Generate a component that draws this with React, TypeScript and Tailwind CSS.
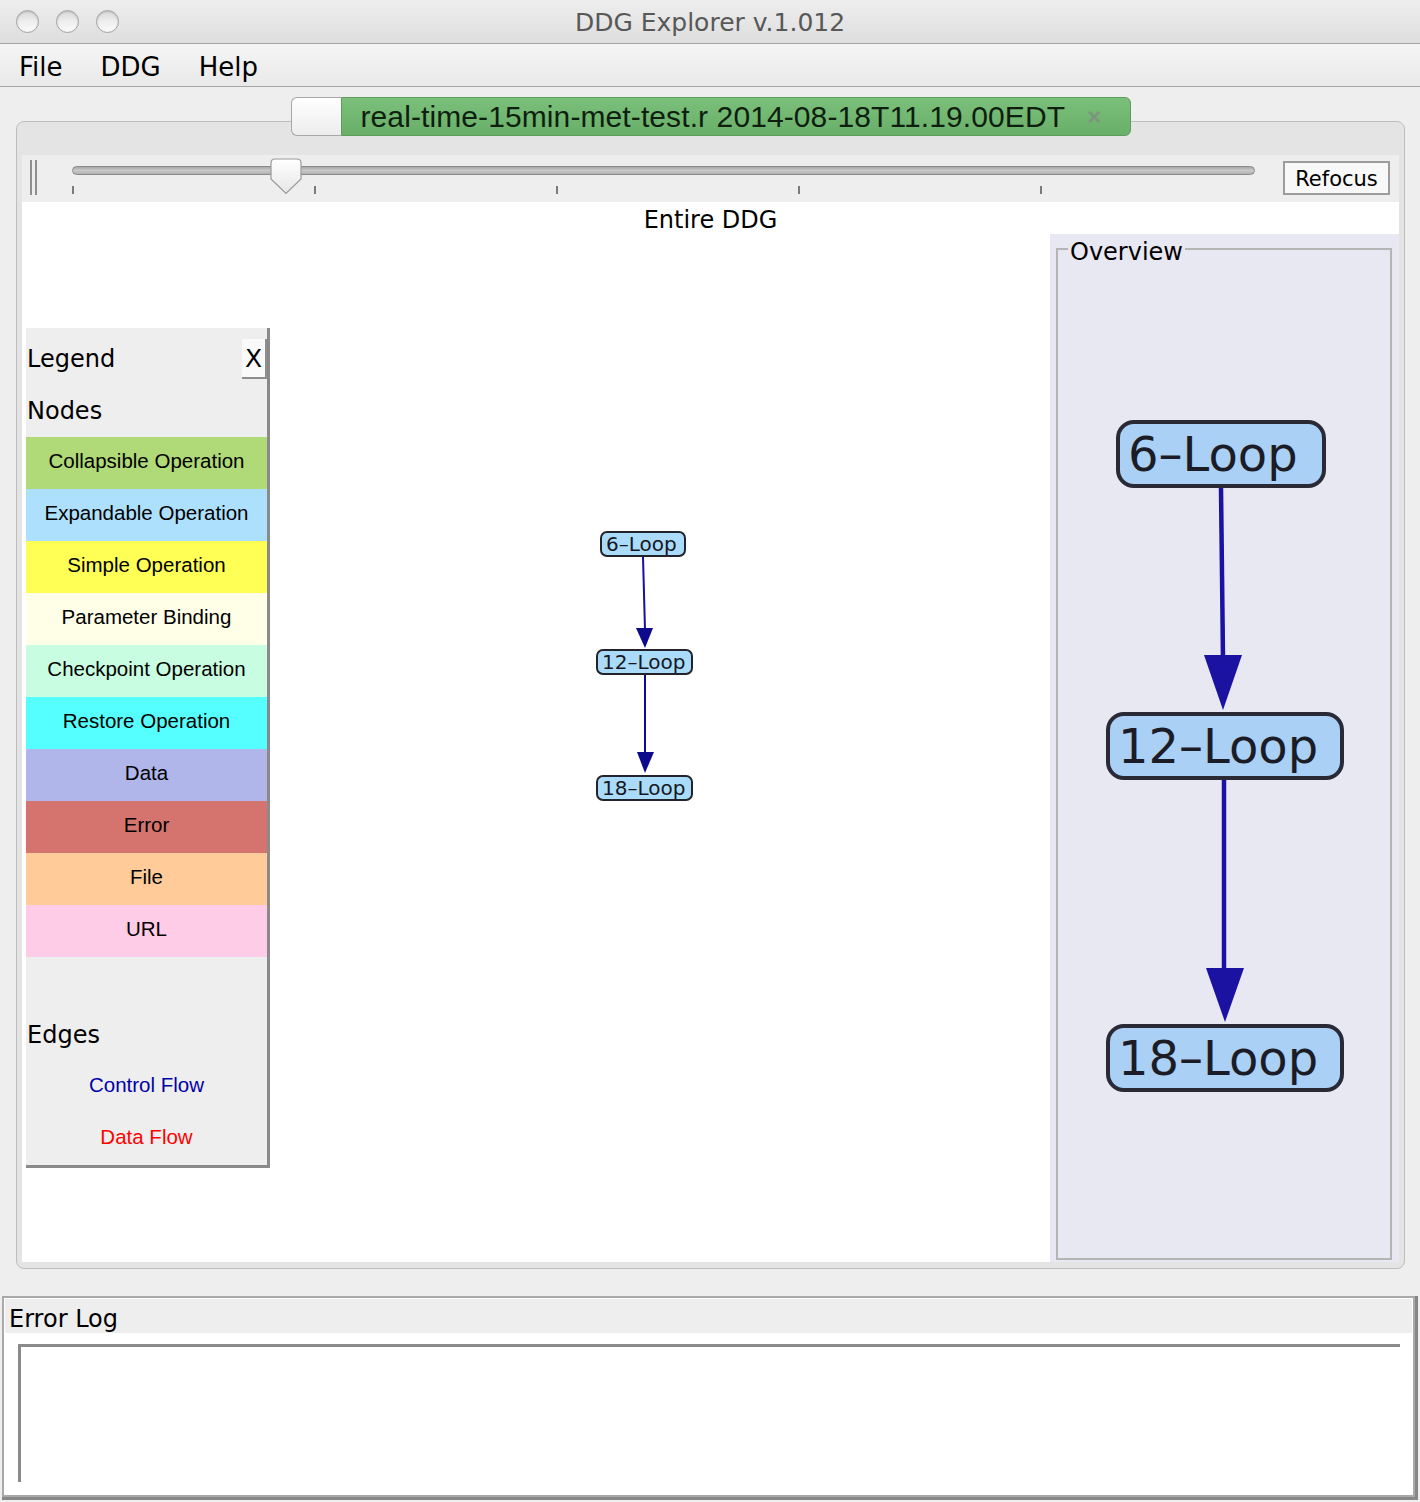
import React from 'react';

const UI = "font-['DejaVu_Sans',sans-serif]";
const HELV = "font-['Liberation_Sans',Arial,sans-serif]";

const legendNodes = [
  { label: 'Collapsible Operation', bg: 'bg-[#b0d978]' },
  { label: 'Expandable Operation', bg: 'bg-[#ade0fd]' },
  { label: 'Simple Operation', bg: 'bg-[#ffff55]' },
  { label: 'Parameter Binding', bg: 'bg-[#ffffe8]' },
  { label: 'Checkpoint Operation', bg: 'bg-[#c8fde1]' },
  { label: 'Restore Operation', bg: 'bg-[#55ffff]' },
  { label: 'Data', bg: 'bg-[#b0b5ea]' },
  { label: 'Error', bg: 'bg-[#d5736e]' },
  { label: 'File', bg: 'bg-[#ffcb98]' },
  { label: 'URL', bg: 'bg-[#ffcce7]' },
];

const Light = () => (
  <div className="w-[23px] h-[23px] rounded-full border border-[#a2a2a2] bg-gradient-to-b from-[#d9d9d9] via-[#eeeeee] to-[#fafafa] shadow-[inset_0_1px_2px_rgba(0,0,0,0.15)]" />
);

const TitleBar = () => (
  <div className="h-[44px] border-b border-[#a3a3a3] bg-gradient-to-b from-[#eeeeee] to-[#dedede] grid grid-cols-[200px_1fr_200px] items-center">
    <div className="flex gap-[17px] pl-[16px]">
      <Light />
      <Light />
      <Light />
    </div>
    <div className="text-center text-[25px] leading-none text-[#585858] pt-[2px]">DDG Explorer v.1.012</div>
    <div />
  </div>
);

const MenuBar = () => (
  <div className="h-[43px] border-b border-[#a6a6a6] bg-gradient-to-b from-[#f5f5f5] to-[#e9e9e9] flex items-center gap-[38px] pl-[19px] pt-[4px] text-[26px] leading-none text-black">
    <span>File</span>
    <span>DDG</span>
    <span>Help</span>
  </div>
);

const SmallNode = ({ label, className }: { label: string; className: string }) => (
  <div
    className={`absolute h-[26px] rounded-[7px] border-2 border-[#23232b] bg-[#aadcf9] flex items-center pl-[4px] text-[20px] leading-none text-[#16161e] ${className}`}
  >
    {label}
  </div>
);

const BigNode = ({ label, className }: { label: string; className: string }) => (
  <div
    className={`absolute h-[68px] rounded-[18px] border-[4px] border-[#2a2a36] bg-[#aad0f5] flex items-center pl-[8px] text-[48px] leading-none text-[#1c1c26] ${className}`}
  >
    {label}
  </div>
);

const Legend = () => (
  <div className="mt-[94px] ml-[4px] w-[244px] bg-[#eeeeee] border-r-[3px] border-b-[3px] border-[#8a8a8a] pt-[5px]">
    <div className="h-[52px] flex items-center justify-between pl-[1px]">
      <span className="text-[24px] leading-none">Legend</span>
      <div className="w-[25px] h-[40px] bg-[#fafafa] border-r-2 border-b-2 border-[#8e8e8e] flex items-center justify-center text-[25px] leading-none">
        X
      </div>
    </div>
    <div className="h-[52px] flex items-center pl-[1px] text-[24px] leading-none">Nodes</div>
    {legendNodes.map((n) => (
      <div key={n.label} className={`h-[52px] flex items-center justify-center pb-[3px] text-[20.5px] leading-none text-black ${HELV} ${n.bg}`}>
        {n.label}
      </div>
    ))}
    <div className="h-[52px]" />
    <div className="h-[52px] flex items-center pl-[1px] text-[24px] leading-none">Edges</div>
    <div className={`h-[52px] flex items-center justify-center pb-[4px] text-[20.5px] leading-none text-[#0000a8] ${HELV}`}>Control Flow</div>
    <div className={`h-[52px] flex items-center justify-center pb-[4px] text-[20.5px] leading-none text-[#ff0000] ${HELV}`}>Data Flow</div>
  </div>
);

const Canvas = () => (
  <div className="relative flex-1 bg-white">
    <Legend />
    <svg className="absolute inset-0 pointer-events-none" width="1029" height="1028">
      <line x1="621" y1="323" x2="623" y2="396" stroke="#1410a0" strokeWidth="2" />
      <polygon points="614,394 631,394 623,414" fill="#0e0a8e" />
      <line x1="623" y1="441" x2="623" y2="520" stroke="#0e0a8e" strokeWidth="2" />
      <polygon points="615,518 632,518 623,539" fill="#0e0a8e" />
    </svg>
    <SmallNode label="6–Loop" className="left-[578px] top-[297px] w-[86px]" />
    <SmallNode label="12–Loop" className="left-[574px] top-[415px] w-[97px]" />
    <SmallNode label="18–Loop" className="left-[574px] top-[541px] w-[97px]" />
  </div>
);

const Overview = () => (
  <div className="relative w-[349px] bg-[#e8e8f3] pt-[14px] pl-[6px] pr-[7px] pb-[2px]">
    <div className="relative h-full border-2 border-[#b4b4b4]">
      <span className="absolute left-[10px] top-[-14px] bg-[#e8e8f3] px-[2px] text-[24px] leading-[32px] text-black">Overview</span>
    </div>
    <svg className="absolute inset-0 pointer-events-none" width="349" height="1028">
      <line x1="171" y1="254" x2="173" y2="425" stroke="#1c12a2" strokeWidth="4.5" />
      <polygon points="154,421 192,421 173,476" fill="#1c12a2" />
      <line x1="174" y1="546" x2="174" y2="738" stroke="#1c12a2" strokeWidth="4.5" />
      <polygon points="156,734 194,734 175,788" fill="#1c12a2" />
    </svg>
    <BigNode label="6–Loop" className="left-[66px] top-[186px] w-[210px]" />
    <BigNode label="12–Loop" className="left-[56px] top-[478px] w-[238px]" />
    <BigNode label="18–Loop" className="left-[56px] top-[790px] w-[238px]" />
  </div>
);

const SliderRow = () => (
  <div className="h-[47px] bg-[#eeeeee] flex items-start">
    <div className="ml-[8px] mt-[5px] flex gap-[3px]">
      <div className="w-[2px] h-[35px] bg-[#8e8e8e]" />
      <div className="w-[2px] h-[35px] bg-[#8e8e8e]" />
    </div>
    <div className="relative ml-[35px] mt-[11px] w-[1183px]">
      <div className="h-[9px] rounded-full border border-[#8a8a8a] bg-gradient-to-b from-[#a9a9a9] via-[#c9c9c9] to-[#b3b3b3]" />
      <div className="mt-[11px] flex gap-[240px]">
        <div className="w-[2px] h-[8px] bg-[#7c7c7c]" />
        <div className="w-[2px] h-[8px] bg-[#7c7c7c]" />
        <div className="w-[2px] h-[8px] bg-[#7c7c7c]" />
        <div className="w-[2px] h-[8px] bg-[#7c7c7c]" />
        <div className="w-[2px] h-[8px] bg-[#7c7c7c]" />
      </div>
      <svg className="absolute left-[198px] top-[-8px]" width="32" height="37" viewBox="0 0 32 37">
        <defs>
          <linearGradient id="thumb" x1="0" y1="0" x2="0" y2="1">
            <stop offset="0" stopColor="#ffffff" />
            <stop offset="1" stopColor="#e6e6e6" />
          </linearGradient>
        </defs>
        <path d="M5,1 H27 Q31,1 31,5 V21 L16,35.5 L1,21 V5 Q1,1 5,1 Z" fill="url(#thumb)" stroke="#9a9a9a" strokeWidth="1.2" />
      </svg>
    </div>
    <button className="ml-auto mr-[9px] mt-[6px] h-[34px] w-[107px] border-2 border-[#9c9c9c] bg-[#f8f8f8] pt-[2px] text-[21px] leading-none text-black">
      Refocus
    </button>
  </div>
);

const Tab = () => (
  <div className="relative z-10 w-[1389px] h-[39px] flex justify-center">
    <div className="w-[50px] h-[39px] rounded-l-[6px] border border-r-0 border-[#a8a8a8] bg-gradient-to-b from-white to-[#ececec]" />
    <div className={`w-[790px] h-[39px] rounded-r-[6px] border border-[#5d9c5d] bg-gradient-to-b from-[#7ac07a] to-[#69af69] flex items-center pl-[19px] text-[30px] leading-none text-[#0f1f0f] ${HELV}`}>
      <span className="tracking-[0.1px]">real-time-15min-met-test.r 2014-08-18T11.19.00EDT</span>
      <span className="ml-[22px] text-[24px] text-[#7f947f] font-bold">×</span>
    </div>
  </div>
);

const ErrorLog = () => (
  <div className="mt-[27px] ml-[2px] w-[1416px] h-[204px] border-r-[3px] border-b-[3px] border-[#878787]">
    <div className="h-full border-2 border-[#a9a9a9]">
      <div className="h-full border border-white bg-white flex flex-col">
        <div className="h-[34px] bg-[#eeeeee] flex items-center pl-[4px] pt-[5px] text-[24px] leading-none text-black">Error Log</div>
        <div className="mt-[11px] ml-[13px] mr-[12px] h-[138px] border-t-[3px] border-l-[3px] border-[#8a8a8a] bg-white" />
      </div>
    </div>
  </div>
);

export default function App() {
  return (
    <div className={`w-[1420px] h-[1502px] overflow-hidden bg-[#eeeeee] text-black ${UI}`}>
      <TitleBar />
      <MenuBar />
      <div className="pt-[10px] pl-[16px]">
        <Tab />
        <div className="-mt-[15px] w-[1389px] h-[1148px] rounded-[8px] border border-[#bdbdbd] bg-[#e4e4e4] px-[5px] pt-[33px]">
          <SliderRow />
          <div className="h-[32px] bg-white flex items-center justify-center pt-[3px] text-[24px] leading-none">Entire DDG</div>
          <div className="h-[1028px] flex">
            <Canvas />
            <Overview />
          </div>
        </div>
      </div>
      <ErrorLog />
    </div>
  );
}
